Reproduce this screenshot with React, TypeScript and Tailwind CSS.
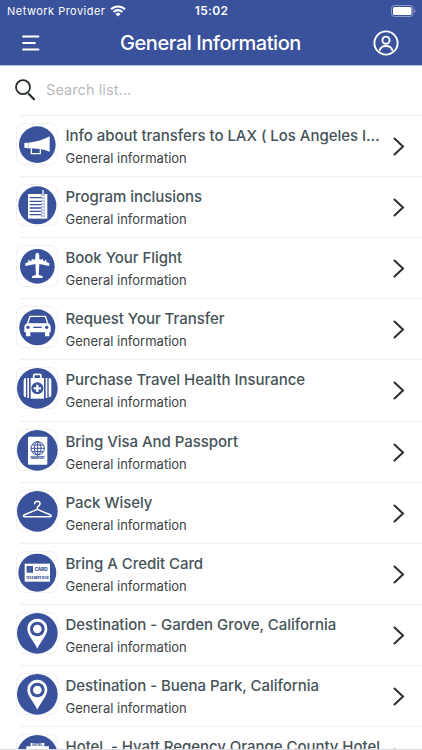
import type { ReactNode } from "react";

const BLUE = "#3a529b";

const icons: Record<string, ReactNode> = {
  megaphone: (
    <>
      <circle cx="61" cy="62" r="55" fill={BLUE} />
      <path d="M22 57l12-1C58 54 80 47 98 37v46C80 76 58 73 34 73l-12-2z" fill="#fff" />
      <path d="M43 73v16h27V76" fill="none" stroke="#fff" strokeWidth="4" />
      <path d="M34 57v15" stroke={BLUE} strokeWidth="1" />
    </>
  ),
  program: (
    <>
      <circle cx="61" cy="61" r="57" fill={BLUE} />
      <path d="M33 27h58v74H33z" fill="#fff" />
      <path d="M38 38h35M38 49h35M38 59h35M38 69h35M38 79h35M38 89h35" stroke={BLUE} strokeWidth="4" />
      <path d="M78 17v80" stroke={BLUE} strokeWidth="8" strokeDasharray="7 2" />
      <path d="M78 15v83" stroke="#fff" strokeWidth="4" />
    </>
  ),
  plane: (
    <>
      <circle cx="61" cy="61" r="52" fill={BLUE} />
      <path
        d="M61 20c4 0 6 5 6 11v8l30 13v8l-30-6-2 32 12 5v5H45v-5l12-5-2-32-30 6v-8l30-13v-8c0-6 2-11 6-11z"
        fill="#fff"
      />
      <path d="M36 43v11M46 40v10M76 40v10M86 43v11" stroke="#fff" strokeWidth="4" strokeLinecap="round" />
    </>
  ),
  car: (
    <>
      <circle cx="61" cy="61" r="54" fill={BLUE} />
      <path d="M39 28h46l8 23H31z" fill="none" stroke="#fff" strokeWidth="4" strokeLinejoin="round" />
      <path d="M27 50h70q4 4 4 9v17H97v12H84V76H40v12H27V76h-5V59q0-5 5-9z" fill="#fff" />
      <circle cx="33" cy="61" r="5" fill={BLUE} />
      <circle cx="89" cy="61" r="5" fill={BLUE} />
      <path d="M49 61h25" stroke={BLUE} strokeWidth="4" />
    </>
  ),
  bag: (
    <>
      <circle cx="61" cy="61" r="61" fill={BLUE} />
      <path d="M50 31v-8q0-4 4-4h14q4 0 4 4v8" fill="none" stroke="#fff" strokeWidth="5" />
      <rect x="41" y="30" width="40" height="62" fill="#fff" />
      <path d="M27 30h-1q-6 0-6 6v46q0 6 6 6h1zM31 30h5v60h-5zM86 30h5v60h-5zM95 30h1q7 0 7 6v46q0 6-7 6h-1z" fill="#fff" />
      <circle cx="61" cy="61" r="18" fill={BLUE} />
      <path d="M61 50v22M50 61h22" stroke="#fff" strokeWidth="7" />
    </>
  ),
  passport: (
    <>
      <circle cx="61" cy="61" r="61" fill={BLUE} />
      <rect x="33" y="20" width="58" height="84" rx="2" fill="#fff" />
      <g fill="none" stroke={BLUE} strokeWidth="3">
        <circle cx="62" cy="55" r="20" />
        <ellipse cx="62" cy="55" rx="10" ry="20" />
        <path d="M62 35v40M42 55h40M45 45h34M45 65h34" />
      </g>
      <text x="62" y="88" textAnchor="middle" textLength="43" fontSize="9" fontWeight="900" fill={BLUE}>
        PASSPORT
      </text>
    </>
  ),
  hanger: (
    <>
      <circle cx="61" cy="61" r="61" fill={BLUE} />
      <path
        d="M53 38c0-10 16-9 16 0 0 7-8 6-8 13v4l40 17c3 2 2 5-1 5H22c-3 0-4-3-1-5l40-17"
        fill="none"
        stroke="#fff"
        strokeWidth="4.5"
        strokeLinecap="round"
        strokeLinejoin="round"
      />
    </>
  ),
  card: (
    <>
      <circle cx="61" cy="62" r="57" fill={BLUE} />
      <rect x="23" y="35" width="76" height="54" fill="#fff" />
      <rect x="29" y="42" width="19" height="20" fill={BLUE} />
      <path d="M33 57h6v-9h5" fill="none" stroke="#8a9acb" strokeWidth="1.5" />
      <text x="53" y="58" textLength="39" fontSize="14" fontWeight="800" fill={BLUE}>
        CARD
      </text>
      <text x="28" y="82" textLength="67" fontSize="9" fontWeight="900" fill={BLUE}>
        1234 DATE 1234
      </text>
    </>
  ),
  pin: (
    <>
      <circle cx="61" cy="61" r="61" fill={BLUE} />
      <path d="M61 17c17 0 30 13 30 30 0 19-19 36-30 60C50 83 31 66 31 47c0-17 13-30 30-30z" fill="#fff" />
      <circle cx="61" cy="48" r="22" fill={BLUE} />
      <circle cx="61" cy="48" r="13" fill="#fff" />
    </>
  ),
  hotel: (
    <>
      <circle cx="61" cy="61" r="61" fill={BLUE} />
      <path d="M28 34h13V24h41v10h14v60H28z" fill="#fff" />
      <text x="61" y="34" textAnchor="middle" textLength="30" fontSize="9" fontWeight="900" fill={BLUE}>
        HOTEL
      </text>
    </>
  ),
};

const items = [
  { icon: "megaphone", title: "Info about transfers to LAX ( Los Angeles International Airport )" },
  { icon: "program", title: "Program inclusions" },
  { icon: "plane", title: "Book Your Flight" },
  { icon: "car", title: "Request Your Transfer" },
  { icon: "bag", title: "Purchase Travel Health Insurance" },
  { icon: "passport", title: "Bring Visa And Passport" },
  { icon: "hanger", title: "Pack Wisely" },
  { icon: "card", title: "Bring A Credit Card" },
  { icon: "pin", title: "Destination - Garden Grove, California" },
  { icon: "pin", title: "Destination - Buena Park, California" },
  { icon: "hotel", title: "Hotel  - Hyatt Regency Orange County Hotel" },
];

const StatusBar = () => (
  <div className="grid h-[21px] grid-cols-3 items-center pl-[7px] pr-[6px] text-[11px]">
    <div className="flex items-center gap-[5px] pt-px whitespace-nowrap tracking-[0.48px]">
      Network Provider
      <svg className="shrink-0" width="16" height="12" viewBox="0 0 16 12" fill="none" stroke="#fff" strokeWidth="2.1">
        <path d="M1 4.3a10 10 0 0 1 14 0M3.6 7a6.2 6.2 0 0 1 8.8 0" />
        <path d="M5.5 9a3.6 3.6 0 0 1 5 0L8 11.6z" fill="#fff" stroke="none" />
      </svg>
    </div>
    <div className="pt-px text-center text-[12px] font-semibold tracking-[0.3px]">15:02</div>
    <svg className="justify-self-end" width="25" height="12" viewBox="0 0 25 12">
      <rect x="0.5" y="0.5" width="21.5" height="11" rx="3" fill="none" stroke="#8d9bc8" />
      <rect x="2" y="2" width="18.5" height="8" rx="1.5" fill="#fff" />
      <path d="M23.2 4v4q1.3-.6 1.3-2t-1.3-2z" fill="#8d9bc8" />
    </svg>
  </div>
);

const Header = () => (
  <header className="h-[66px] shrink-0 border-b border-[#b6c3e6] bg-[#3a529b] text-white">
    <StatusBar />
    <div className="grid h-[43px] grid-cols-[1fr_auto_1fr] items-center pl-[22px] pr-[23px]">
      <svg width="18" height="16" viewBox="0 0 18 16" stroke="#fff" strokeWidth="1.8" strokeLinecap="round">
        <path d="M1 1.5h15.5M1 8h12M1 14.5h15.5" />
      </svg>
      <h1 className="text-[20px] font-medium tracking-[-0.46px]">General Information</h1>
      <svg className="justify-self-end" width="26" height="26" viewBox="0 0 26 26" fill="none" stroke="#fff" strokeWidth="1.9">
        <circle cx="13" cy="13" r="11.6" />
        <circle cx="13" cy="10.2" r="3.6" />
        <path d="M6.8 20c1.4-5.4 11-5.4 12.4 0" strokeLinecap="round" />
      </svg>
    </div>
  </header>
);

const SearchBar = () => (
  <div className="flex h-[48.8px] shrink-0 items-center gap-[11px] pl-[15px]">
    <svg width="20" height="22" viewBox="0 0 20 22" fill="none" stroke="#252b2f" strokeWidth="1.8">
      <circle cx="8" cy="8.2" r="7" />
      <path d="M13.8 15l5.2 5.2" strokeWidth="2.2" strokeLinecap="round" />
    </svg>
    <span className="pb-px text-[14.5px] tracking-[0.08px] text-[#b9bbbe]">Search list...</span>
  </div>
);

const Row = ({ icon, title }: { icon: string; title: string }) => (
  <li className="flex h-[61.16px] shrink-0 flex-col">
    <div className="ml-5 h-px shrink-0 bg-[#f0f0f1]" />
    <div className="flex pl-[16px]">
      <div className="mt-[7px] size-[42px] shrink-0 rounded-lg border border-[#f1f1f2]">
        <svg width="41" height="41" viewBox="0 0 123 123">
          {icons[icon]}
        </svg>
      </div>
      <div className="ml-[7.5px] w-[318px] shrink-0 pt-[9px]">
        <p className="truncate whitespace-pre text-[15px] leading-[22px] font-medium tracking-[-0.04px] text-[#465359]">
          {title}
        </p>
        <p className="text-[13px] leading-[22px] text-[#3c4245]">General information</p>
      </div>
      <svg className="mt-[21px] ml-[9.5px]" width="12" height="19" viewBox="0 0 12 19" fill="none" stroke="#292e32" strokeWidth="2">
        <path d="M1.5 1.5l8.5 8-8.5 8" strokeLinecap="round" />
      </svg>
    </div>
  </li>
);

export default function App() {
  return (
    <div className="flex h-[750px] w-[422px] flex-col overflow-hidden bg-white font-['Inter','Liberation_Sans',sans-serif]">
      <Header />
      <SearchBar />
      <ul className="flex min-h-0 flex-1 flex-col overflow-hidden border-b border-[#d9dadd]">
        {items.map((item) => (
          <Row key={item.title} {...item} />
        ))}
      </ul>
    </div>
  );
}
